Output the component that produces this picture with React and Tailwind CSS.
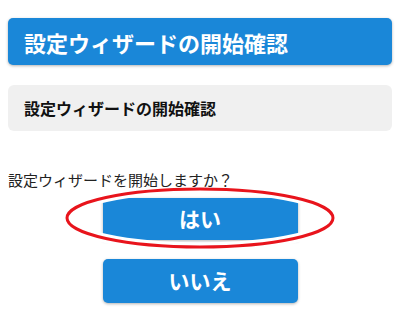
export default function App() {
  const font = { fontFamily: '"Noto Sans CJK JP", "Noto Sans", sans-serif' };
  return (
    <div className="w-[400px] h-[332px] bg-white overflow-hidden" style={font}>
      <div className="px-2 pt-[18px]">
        <div className="h-[47px] bg-[#1a87d8] rounded-[5px] shadow-[0_1px_3px_rgba(0,0,0,0.3)] flex items-center pl-[16px]">
          <span className="text-white font-bold text-[22px] leading-none">設定ウィザードの開始確認</span>
        </div>
        <div className="mt-[20px] h-[46px] bg-[#f0f0f0] rounded-[6px] flex items-center pl-[16px]">
          <span className="text-[#111] font-bold text-[16px] leading-none">設定ウィザードの開始確認</span>
        </div>
        <div className="mt-[41px] text-[15px] leading-none text-[#222]">設定ウィザードを開始しますか？</div>
      </div>
      <div className="relative mt-[11px] flex flex-col items-center">
        <button className="w-[195px] h-[42px] bg-[#1a87d8] shadow-[0_1px_3px_rgba(0,0,0,0.3)] text-white font-bold text-[21px] flex items-center justify-center">
          はい
        </button>
        <svg className="absolute left-[62px] top-[-11px]" width="276" height="64" viewBox="0 0 276 64">
          <ellipse cx="138" cy="31" rx="133" ry="29" fill="none" stroke="white" strokeWidth="9" />
          <ellipse cx="138" cy="31" rx="133" ry="29" fill="none" stroke="#e8141c" strokeWidth="3" />
        </svg>
        <button className="mt-[19px] w-[195px] h-[44px] bg-[#1a87d8] rounded-[5px] shadow-[0_1px_3px_rgba(0,0,0,0.3)] text-white font-bold text-[21px] flex items-center justify-center">
          いいえ
        </button>
      </div>
    </div>
  );
}
